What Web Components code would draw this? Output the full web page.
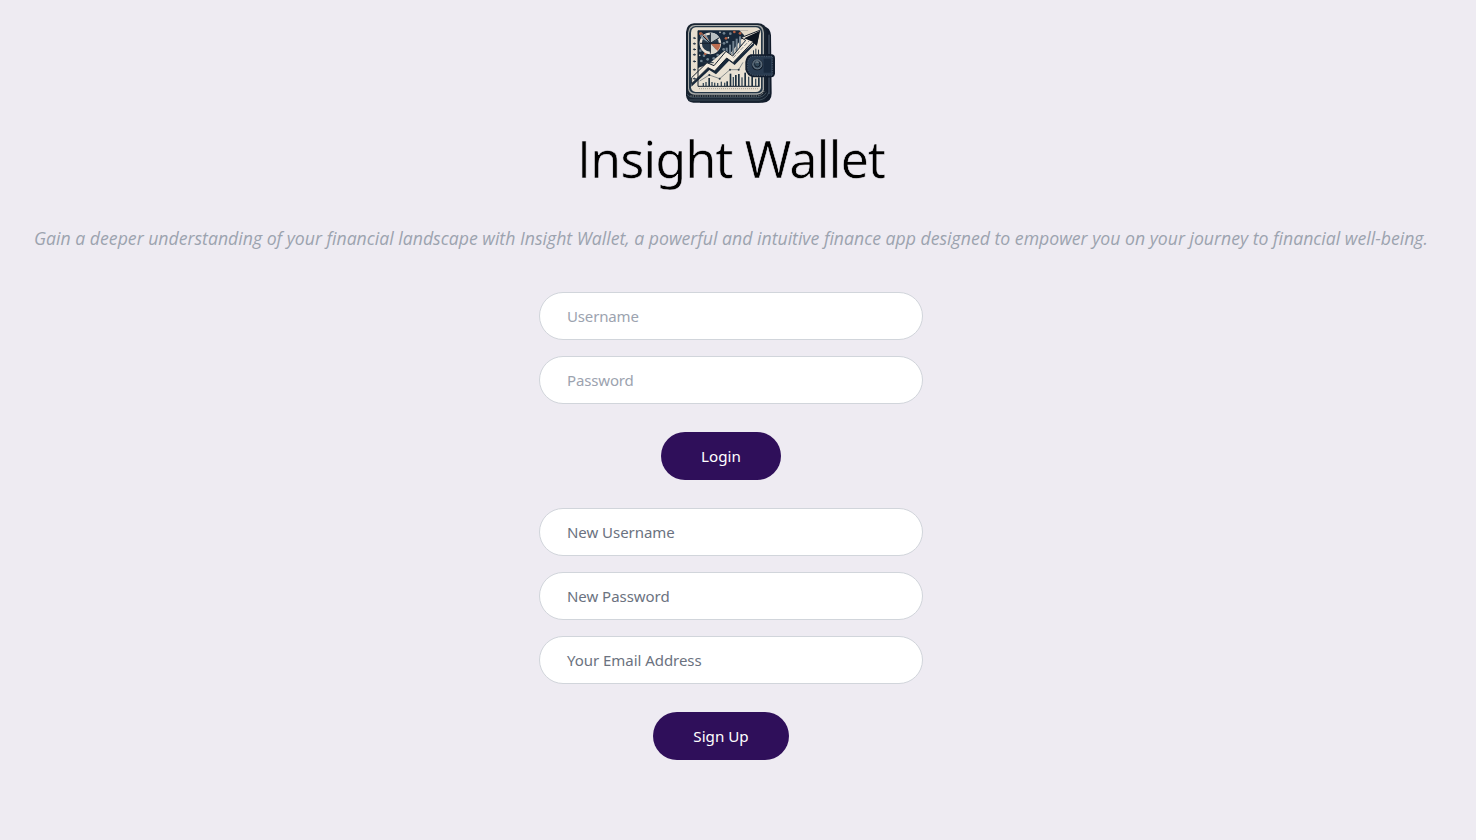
<!DOCTYPE html>
<html lang="en">
<head>
<meta charset="utf-8">
<title>Insight Wallet</title>
<style>
body{margin:0;background:#eeebf2;font-family:"Open Sans","Noto Sans",sans-serif;min-height:840px;overflow:hidden}
</style>
</head>
<body>
<wallet-page></wallet-page>
<script>
const define = (name, html) => customElements.define(name, class extends HTMLElement {
  constructor() {
    super();
    const t = document.createElement('template');
    t.innerHTML = html;
    this.attachShadow({mode: 'open'}).append(t.content.cloneNode(true));
  }
});

const bars = (list, base, w) => list.map(([x, h]) => `<rect x="${x}" y="${base - h}" width="${w}" height="${h}"/>`).join('');
const dots = (list, r) => list.map(([x, y]) => `<circle cx="${x}" cy="${y}" r="${r}"/>`).join('');

define('wallet-logo', `
<style>:host{display:block;width:100px;height:90px;margin-right:2px}svg{display:block}</style>
<svg width="100" height="90" viewBox="0 0 300 270" aria-label="Wallet with charts">
  <path d="M240 22Q270 24 273 52L275 226Q275 254 248 254L60 254 60 200 240 40Z" fill="#111b2a"/>
  <path d="M267 50V108M267 178V228" stroke="#526273" stroke-width="3"/>
  <path d="M42 16H234Q258 16 260 44V226Q260 253 236 254H40Q20 253 18 232V42Q20 18 42 16Z" fill="#17222f"/>
  <path d="M44 21H232Q251 22 252 44V214Q250 229 232 230H44Q26 229 24 212V44Q26 22 44 21Z" fill="#a8aaa8"/>
  <path d="M46 24H230Q247 25 248 46V212Q247 225 230 226H46Q29 225 27 210V46Q29 26 46 24Z" fill="#253747"/>
  <path d="M47 28H228Q242 29 243 46V209Q241 221 228 222H47Q34 221 33 208V44Q34 29 47 28Z" fill="#e8dfd0"/>
  <path d="M21 229Q28 239 44 239H230Q250 238 259 224M28 246H239Q260 242 266 224" fill="none" stroke="#526471" stroke-width="2"/>
  <path d="M31 234H231Q247 233 252 219" fill="none" stroke="#c6c5bd" stroke-width="2" stroke-dasharray="4 3"/>
  <path d="M55 38H224V204H55Z" fill="#e9e1d3"/>
  <path d="M54 37H205L150 108 134 98 86 138 54 150Z" fill="#17283a"/>
  <path d="M178 37H224L197 56Z" fill="#e3d9c8"/>
  <g fill="#718290">${bars([[137,23],[147,32],[157,43],[167,50],[177,57]], 112, 6)}</g>
  <g fill="#70828f">${dots([[64,53],[72,113],[83,124],[101,121],[113,111],[132,76],[131,94],[141,72],[61,98],[132,46],[151,47],[64,129]], 4)}</g>
  <g fill="#b65e40">${dots([[61,47],[76,107],[138,61],[163,42],[180,46]], 4)}</g>
  <g fill="#d4d1c6">${dots([[120,43],[145,59],[59,112],[118,121],[129,108],[64,79]], 2.5)}</g>
  <circle cx="91" cy="76" r="29" fill="#26394a" stroke="#e9e2d7" stroke-width="7"/>
  <path d="M91 76V44A32 32 0 0 1 119 61Z" fill="#b9c0c1"/>
  <path d="M91 76L121 76A31 31 0 0 1 112 99Z" fill="#be6e50"/>
  <path d="M91 76L112 99A31 31 0 0 1 91 107Z" fill="#d9d8d0"/>
  <path d="M91 76L63 61A32 32 0 0 1 78 48Z" fill="#8c9ea9"/>
  <path d="M91 44V107M60 76H122M69 54L91 76M91 76L118 59" stroke="#17222f" stroke-width="3"/>
  <path d="M63 43L83 65" stroke="#d17b58" stroke-width="3"/>
  <path d="M34 192L86 142 107 153 145 112 164 126 224 72 222 82 164 141 147 128 108 169 88 156 34 206Z" fill="#17283a"/>
  <path d="M35 179L81 134 102 143 138 100 158 114 197 67 183 59 239 37 230 80 218 72 159 134 140 120 104 159 84 149 35 197Z" fill="#f2eadc" stroke="#17212d" stroke-width="3"/>
  <path d="M153 108L200 65M160 119L207 69" stroke="#596774" stroke-width="2" stroke-dasharray="12 4"/>
  <path d="M192 61L239 39 230 84 218 71Z" fill="#0b131e"/>
  <path d="M62 134H101" stroke="#243443" stroke-width="3"/>
  <path d="M59 189L88 171 119 182 150 155 176 155 189 133" fill="none" stroke="#53616a" stroke-width="2"/>
  <g fill="#263543">${dots([[88,171],[119,182],[150,155],[176,155]], 3)}</g>
  <g fill="#3a4c5a">${bars([[68,9],[76,12],[94,12],[102,10],[111,9],[122,13],[132,10],[158,27],[184,26],[204,28],[225,22]], 204, 4)}</g>
  <g fill="#1d303f">${bars([[85,24],[139,14],[149,37],[165,33],[174,36],[193,40],[214,30],[234,26]], 204, 5)}</g>
  <g fill="#263543">${bars([[219,13],[226,18],[234,15]], 110, 3)}</g>
  <path d="M54 38V205H239" fill="none" stroke="#17222f" stroke-width="3"/>
  <path d="M57 212H235" stroke="#827f77" stroke-width="3" stroke-dasharray="2 4"/>
  <g fill="#273646">${[60,77,94,110,130,155,182].map(y => `<path d="M38 ${y}l6-4v3h4v3h-4v2z"/>`).join('')}</g>
  <path d="M212 109H276Q285 111 285 121V166Q284 178 274 178H220Q200 174 196 154V132Q199 113 212 109Z" fill="#101c2d"/>
  <path d="M216 115H277V172H221Q206 169 203 153V133Q205 119 216 115Z" fill="#293b50" stroke="#75818e" stroke-width="1.5" stroke-dasharray="4 3"/>
  <path d="M251 122H273V164H251Z" fill="#19293d"/>
  <circle cx="232" cy="140" r="17" fill="#0b1624"/>
  <circle cx="232" cy="139" r="14" fill="#435667" stroke="#8996a0" stroke-width="2"/>
  <circle cx="232" cy="139" r="8" fill="#344a5b" stroke="#101b29" stroke-width="3"/>
  <path d="M226 135Q230 129 236 133" fill="none" stroke="#9eabb2" stroke-width="3"/>
</svg>`);

define('wallet-heading', `
<style>
:host{display:block;height:72px;margin-top:15px;color:#000}
h1{margin:0;font:400 50.5px/72px "Noto Sans",sans-serif;letter-spacing:-1.1px;-webkit-text-stroke:.6px #eeebf2;text-align:center;white-space:nowrap}
</style><h1><slot></slot></h1>`);

define('wallet-tagline', `
<style>
:host{display:block;margin-top:29px;height:28px;color:#9ca3af}
p{margin:0;font:italic 400 17.66px/28px "Open Sans",sans-serif;text-align:center;white-space:nowrap}
</style><p><slot></slot></p>`);

define('wallet-field', `
<style>
:host{display:block;box-sizing:border-box;width:384px;height:48px;border:1px solid #d1d5db;border-radius:24px;background:#fff;padding:0 27px;color:#6b7280;font:15px/47px "Noto Sans",sans-serif;letter-spacing:-.04px;white-space:nowrap}
:host([muted]){color:#9ca3af;letter-spacing:-.15px}
</style><slot></slot>`);

define('wallet-button', `
<style>
:host{display:block;margin:12px 20px 12px 0}
button{display:block;width:var(--w);height:48px;padding:0;border:0;border-radius:24px;background:#2f0f5a;color:#fff;font:15.2px/48px "Noto Sans",sans-serif}
</style><button><slot></slot></button>`);

define('wallet-form', `
<style>:host{display:flex;flex-direction:column;align-items:center;gap:16px}</style><slot></slot>`);

define('wallet-page', `
<style>
:host{display:flex;flex-direction:column;align-items:center;box-sizing:border-box;width:1462px;padding-top:18px}
wallet-form{margin-top:40px}
wallet-form + wallet-form{margin-top:16px}
.plain{font-family:"Open Sans",sans-serif}
</style>
<wallet-logo></wallet-logo>
<wallet-heading><span class="plain">I</span>nsight Wallet</wallet-heading>
<wallet-tagline>Gain a deeper understanding of your financial landscape with Insight Wallet, a powerful and intuitive finance app designed to empower you on your journey to financial well-being.</wallet-tagline>
<wallet-form>
  <wallet-field muted>Username</wallet-field>
  <wallet-field muted>Password</wallet-field>
  <wallet-button style="--w:120px">Login</wallet-button>
</wallet-form>
<wallet-form>
  <wallet-field>New Username</wallet-field>
  <wallet-field>New Password</wallet-field>
  <wallet-field>Your Email Address</wallet-field>
  <wallet-button style="--w:136px">Sign Up</wallet-button>
</wallet-form>`);
</script>
</body>
</html>
